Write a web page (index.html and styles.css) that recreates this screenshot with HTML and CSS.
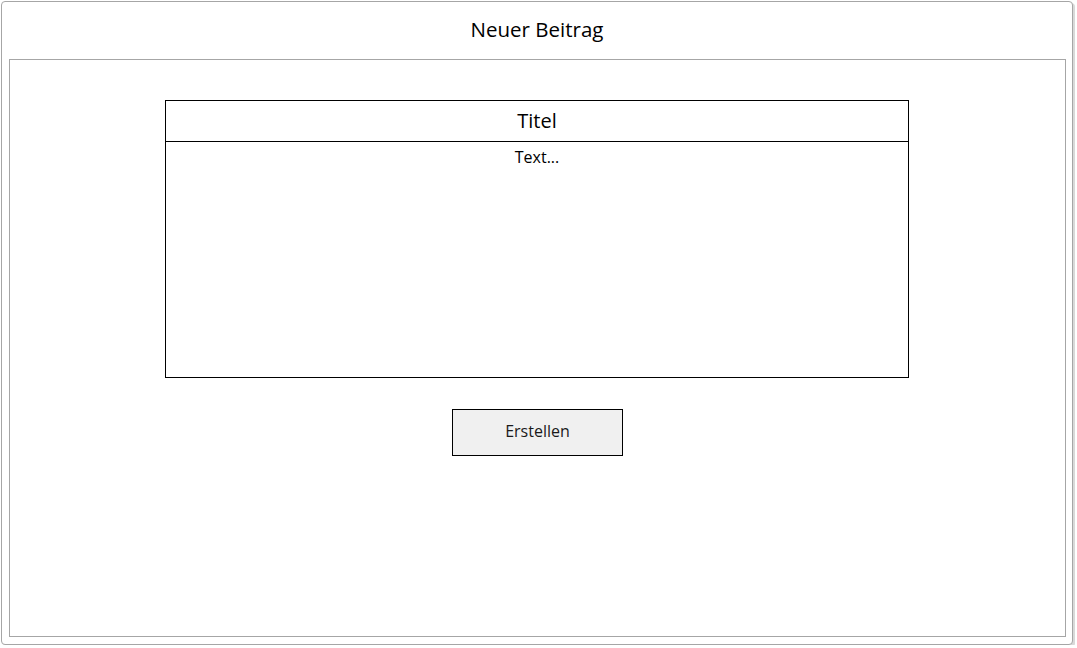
FILE: index.html
```html
<!DOCTYPE html>
<html lang="de">
<head>
<meta charset="utf-8">
<title>Neuer Beitrag</title>
<link rel="stylesheet" href="styles.css">
</head>
<body>
<div class="window">
  <div class="window-title">Neuer Beitrag</div>
  <div class="panel">
    <div class="post-box">
      <div class="post-title">Titel</div>
      <div class="post-text">Text...</div>
    </div>
    <div class="actions">
      <div class="btn">Erstellen</div>
    </div>
  </div>
</div>
</body>
</html>
```
FILE: styles.css
```css
html, body {
  margin: 0;
  padding: 0;
  background: #ffffff;
}
body {
  font-family: "Open Sans", "Noto Sans", sans-serif;
  color: #000;
  padding: 1px 0 0 1px;
}
.window {
  box-sizing: border-box;
  width: 1072px;
  height: 644px;
  border: 1px solid #a6a6a6;
  border-radius: 4px;
  box-shadow: 2px 2px 0 0 #d9d9d9;
  background: #fff;
  display: flex;
  flex-direction: column;
}
.window-title {
  height: 57px;
  display: flex;
  align-items: center;
  justify-content: center;
  font-size: 20.5px;
  padding-bottom: 3px;
  box-sizing: border-box;
}
.panel {
  box-sizing: border-box;
  width: 1057px;
  height: 578px;
  margin-left: 7px;
  border: 1px solid #a6a6a6;
  display: flex;
  flex-direction: column;
  align-items: center;
  padding-top: 40px;
}
.post-box {
  box-sizing: border-box;
  width: 744px;
  height: 278px;
  border: 1px solid #000;
  display: flex;
  flex-direction: column;
  margin-left: -1px;
}
.post-title {
  box-sizing: border-box;
  height: 41px;
  border-bottom: 1px solid #000;
  display: flex;
  align-items: center;
  justify-content: center;
  font-size: 20px;
  padding-bottom: 2px;
}
.post-text {
  text-align: center;
  font-size: 16px;
  padding-top: 4px;
}
.actions {
  margin-top: 31px;
}
.btn {
  box-sizing: border-box;
  width: 171px;
  height: 47px;
  border: 1px solid #000;
  background: #f0f0f0;
  display: flex;
  align-items: center;
  justify-content: center;
  font-size: 16px;
  padding-bottom: 3px;
  color: #1a1a1a;
}
```
